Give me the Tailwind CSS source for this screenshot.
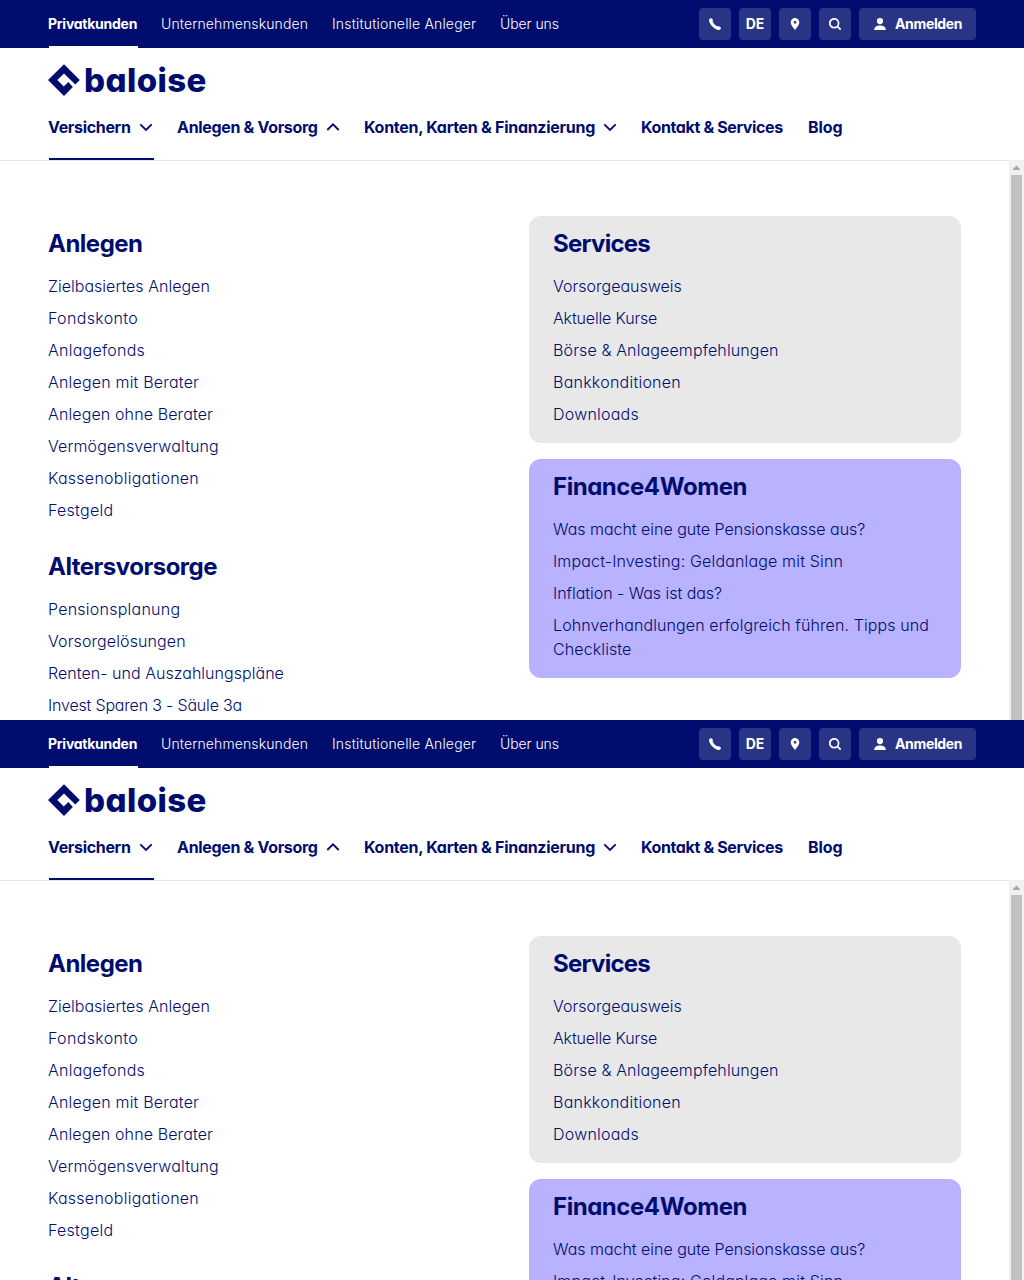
<!DOCTYPE html>
<html lang="de">
<head>
<meta charset="utf-8">
<title>Baloise</title>
<script src="https://cdn.jsdelivr.net/npm/@tailwindcss/browser@4"></script>
</head>
<body class="h-[1280px] w-[1024px] overflow-hidden bg-white font-['Inter',sans-serif] text-[#000d6e] [font-feature-settings:'cv11']">
<template id="page">
  <section class="flex h-[720px] w-[1024px] flex-col overflow-hidden bg-white">
    <!-- Meta bar -->
    <div class="flex h-12 shrink-0 items-center justify-between bg-[#000d6e] px-12 text-sm text-white">
      <nav class="flex h-full gap-6 whitespace-nowrap font-light">
        <a class="flex w-[89px] flex-col font-bold tracking-[-0.26px]"><span class="flex flex-1 items-center pt-0.5">Privatkunden</span><span class="ml-px h-0.5 w-[89px] bg-white"></span></a>
        <a class="flex w-[147px] items-center tracking-[0.12px]">Unternehmenskunden</a>
        <a class="flex w-36 items-center tracking-[0.17px]">Institutionelle Anleger</a>
        <a class="flex items-center tracking-[-0.08px]">Über uns</a>
      </nav>
      <div class="flex gap-2 font-bold">
        <button class="grid size-8 place-items-center rounded bg-[#293485]">
          <svg class="size-3" viewBox="0 0 12 12" fill="currentColor"><path d="M.4 1C.9.300 1.800 0 2.500.2c.7.200 1.200 1.100 1.300 2 .1.800-.2 1.200 0 1.600.6 1.600 2.200 3.300 3.900 4.200.5.300 1 .100 1.800.3.900.200 2 .9 2.300 1.500.3.800-.3 1.600-1 1.900-1.600.6-4.100-.2-6.300-2.100C2.100 7.500.5 5.200.1 3.100 0 2.200 0 1.600.4 1Z"/></svg>
        </button>
        <button class="grid size-8 place-items-center rounded bg-[#293485]">DE</button>
        <button class="grid size-8 place-items-center rounded bg-[#293485]">
          <svg class="size-3" viewBox="0 0 12 12" fill="currentColor" fill-rule="evenodd"><path d="M6 0a4.300 4.300 0 0 0-4.300 4.300C1.700 7 4.600 10.200 6 12c1.400-1.800 4.300-5 4.300-7.700A4.300 4.300 0 0 0 6 0Zm0 2.900a1.400 1.400 0 1 1 0 2.800 1.400 1.400 0 0 1 0-2.800Z"/></svg>
        </button>
        <button class="grid size-8 place-items-center rounded bg-[#293485]">
          <svg class="size-3" viewBox="0 0 12 12" fill="none" stroke="currentColor" stroke-width="1.700"><circle cx="5.200" cy="5.200" r="4.400"/><path d="m8.400 8.400 3.300 3.300"/></svg>
        </button>
        <button class="flex h-8 w-[117px] items-center gap-[9px] rounded bg-[#293485] pl-[15px] tracking-[-0.35px]">
          <svg class="size-3" viewBox="0 0 12 12" fill="currentColor"><circle cx="6" cy="3.100" r="3.100"/><path d="M.1 12C.3 9 2.800 7.600 6 7.600S11.700 9 11.900 12Z"/></svg>
          Anmelden
        </button>
      </div>
    </div>

    <!-- Brand and main navigation -->
    <header class="flex h-[113px] shrink-0 flex-col border-b border-[#e5e5e5] px-12 pt-4">
      <a class="flex h-8 items-center gap-1">
        <svg class="size-8" viewBox="0 0 32 32" fill="currentColor"><path d="M16 .3 31.800 16l-4.500 4.600L16 9.400 9.300 16.100l6.500 6.500 4.500-4.500 4.600 5L16 32 0 16.100Z"/></svg>
        <span class="pb-px text-[33px] leading-8 font-extrabold tracking-[0.4px]">baloise</span>
      </a>
      <nav class="flex flex-1 gap-[23px] font-bold whitespace-nowrap">
        <a class="flex flex-col">
          <span class="flex flex-1 items-center gap-2"><span class="w-[82px] tracking-[-0.33px]">Versichern</span>
          <svg class="size-4" viewBox="0 0 16 16" fill="none" stroke="currentColor" stroke-width="1.800"><path d="m2.300 5.300 5.700 5.700 5.700-5.700"/></svg></span>
          <span class="ml-px h-0.5 w-[105px] bg-[#000d6e]"></span>
        </a>
        <a class="flex items-center gap-2 pb-0.5"><span class="w-[140px] tracking-[-0.32px]">Anlegen &amp; Vorsorg</span>
          <svg class="size-4" viewBox="0 0 16 16" fill="none" stroke="currentColor" stroke-width="1.800"><path d="M2.300 11 8 5.300l5.700 5.700"/></svg></a>
        <a class="flex items-center gap-2 pb-0.5"><span class="w-[230px] tracking-[-0.28px]">Konten, Karten &amp; Finanzierung</span>
          <svg class="size-4" viewBox="0 0 16 16" fill="none" stroke="currentColor" stroke-width="1.800"><path d="m2.300 5.300 5.700 5.700 5.700-5.700"/></svg></a>
        <a class="flex w-36 items-center pb-0.5 tracking-[-0.37px]">Kontakt &amp; Services</a>
        <a class="flex items-center pb-0.5 tracking-[-0.1px]">Blog</a>
      </nav>
    </header>

    <!-- Flyout panel -->
    <main class="flex min-h-0 flex-1">
      <div class="flex min-w-0 flex-1 items-start gap-[49px] pt-[55px] pr-12 pl-12">
        <div class="w-[432px] shrink-0 pt-3 font-light">
          <h2 class="mb-3.5 text-2xl font-bold tracking-[-0.5px]">Anlegen</h2>
          <ul class="flex flex-col gap-2">
            <li class="tracking-[0.02px]">Zielbasiertes Anlegen</li>
            <li class="tracking-[0.34px]">Fondskonto</li>
            <li class="tracking-[0.24px]">Anlagefonds</li>
            <li class="tracking-[0.19px]">Anlegen mit Berater</li>
            <li class="tracking-[0.12px]">Anlegen ohne Berater</li>
            <li class="tracking-[0.12px]">Vermögensverwaltung</li>
            <li class="tracking-[0.25px]">Kassenobligationen</li>
            <li class="tracking-[0.26px]">Festgeld</li>
          </ul>
          <h2 class="mt-[29px] mb-3.5 text-2xl font-bold tracking-[-0.51px]">Altersvorsorge</h2>
          <ul class="flex flex-col gap-2">
            <li class="tracking-[0.24px]">Pensionsplanung</li>
            <li class="tracking-[0.11px]">Vorsorgelösungen</li>
            <li class="tracking-[0.04px]">Renten- und Auszahlungspläne</li>
            <li class="tracking-[-0.18px]">Invest Sparen 3 - Säule 3a</li>
          </ul>
        </div>
        <div class="flex w-[432px] shrink-0 flex-col gap-4 font-light">
          <div class="rounded-xl bg-[#e8e8e8] px-6 pt-3 pb-[17px]">
            <h2 class="mb-3.5 text-2xl font-bold tracking-[-0.73px]">Services</h2>
            <ul class="flex flex-col gap-2">
              <li class="tracking-[0.01px]">Vorsorgeausweis</li>
              <li class="tracking-[-0.16px]">Aktuelle Kurse</li>
              <li class="tracking-[0.13px]">Börse &amp; Anlageempfehlungen</li>
              <li class="tracking-[0.24px]">Bankkonditionen</li>
              <li class="tracking-[0.23px]">Downloads</li>
            </ul>
          </div>
          <div class="rounded-xl bg-[#b8b2ff] px-6 pt-3 pb-[17px]">
            <h2 class="mb-3.5 text-2xl font-bold tracking-[-0.45px]">Finance4Women</h2>
            <ul class="flex flex-col gap-2">
              <li class="tracking-[-0.02px]">Was macht eine gute Pensionskasse aus?</li>
              <li class="tracking-[0.16px]">Impact-Investing: Geldanlage mit Sinn</li>
              <li class="tracking-[-0.04px]">Inflation - Was ist das?</li>
              <li class="tracking-[0.11px]">Lohnverhandlungen erfolgreich führen. Tipps und Checkliste</li>
            </ul>
          </div>
        </div>
      </div>
      <div class="-mt-px flex w-[15px] shrink-0 flex-col items-center bg-[#f1f1f1]">
        <svg class="h-[15px] w-[15px] shrink-0" viewBox="0 0 15 15" fill="#a3a3a3"><path d="M7.500 5.500 11.500 10h-8Z"/></svg>
        <div class="w-[11px] flex-1 bg-[#c1c1c1]"></div>
      </div>
    </main>
  </section>
</template>
<script>
  // The page is tiled vertically until the viewport is filled.
  const page = document.getElementById('page');
  for (let y = 0; y < 1280; y += 720) document.body.append(page.content.cloneNode(true));
</script>
</body>
</html>
